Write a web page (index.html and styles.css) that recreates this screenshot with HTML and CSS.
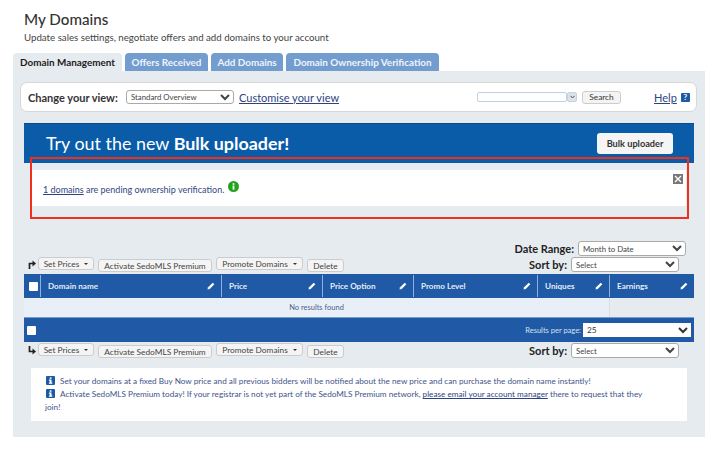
FILE: index.html
```html
<!DOCTYPE html>
<html lang="en">
<head>
<meta charset="utf-8">
<title>My Domains</title>
<link rel="stylesheet" href="styles.css">
</head>
<body>
<svg class="defs" width="0" height="0" aria-hidden="true">
  <symbol id="pencil" viewBox="0 0 10 10"><path d="M7.2.8 9.2 2.8 3.4 8.6.6 9.4 1.4 6.6Z" fill="#fff"/></symbol>
  <symbol id="info" viewBox="0 0 9 9"><rect width="9" height="9" rx="1" fill="#1d5aa6"/><rect x="3.7" y="1.3" width="1.8" height="1.5" fill="#fff"/><path d="M2.9 3.6H5.5V6.6H6.3V7.8H2.9V6.6H3.7V4.7H2.9Z" fill="#fff"/></symbol>
</svg>
<header class="head">
  <h1>My Domains</h1>
  <p>Update sales settings, negotiate offers and add domains to your account</p>
</header>
<nav class="tabs">
  <a class="tab active w1">Domain Management</a>
  <a class="tab w2">Offers Received</a>
  <a class="tab w3">Add Domains</a>
  <a class="tab w4">Domain Ownership Verification</a>
</nav>
<main class="panel">
  <section class="viewbar">
    <label class="viewlabel">Change your view:</label>
    <select class="sel viewsel"><option>Standard Overview</option></select>
    <a class="link custom">Customise your view</a>
    <span class="combo"><span class="comboinput"></span><span class="comboarrow"><svg width="5" height="4" viewBox="0 0 5 4"><path d="M.5.8 2.5 3 4.5.8" fill="none" stroke="#555" stroke-width="1"/></svg></span></span>
    <button class="btn searchbtn">Search</button>
    <a class="link help">Help</a>
    <span class="helpicon">?</span>
  </section>

  <section class="banner">
    <span class="bannertext">Try out the new <b>Bulk uploader!</b></span>
    <button class="bulkbtn">Bulk uploader</button>
  </section>

  <section class="noticewrap">
    <div class="notice">
      <span class="noticetext"><a class="link">1 domains</a> are pending ownership verification.</span>
      <svg class="okicon" width="11" height="11" viewBox="0 0 11 11"><circle cx="5.5" cy="5.5" r="5.5" fill="#24a31c"/><rect x="4.6" y="2.2" width="1.8" height="1.6" fill="#fff"/><rect x="4.6" y="4.6" width="1.8" height="4" fill="#fff"/></svg>
      <svg class="closeicon" width="10" height="10" viewBox="0 0 10 10"><rect width="10" height="10" fill="#777"/><path d="M2 2 8 8M8 2 2 8" stroke="#fff" stroke-width="1.4"/></svg>
    </div>
    <div class="redbox"></div>
  </section>

  <div class="daterow">
    <label class="biglabel">Date Range:</label>
    <select class="sel datesel"><option>Month to Date</option></select>
  </div>

  <div class="toolrow top">
    <svg class="arrow" width="8" height="9" viewBox="0 0 8 9"><path d="M1.5 9V3.5H5" fill="none" stroke="#222" stroke-width="1.7"/><path d="M4.5.6 8 3.5 4.5 6.4Z" fill="#222"/></svg>
    <button class="btn drop b1">Set Prices<i class="caret"></i></button>
    <button class="btn low b2">Activate SedoMLS Premium</button>
    <button class="btn drop b3">Promote Domains<i class="caret"></i></button>
    <button class="btn low b4">Delete</button>
    <span class="sortgroup"><label class="biglabel">Sort by:</label><select class="sel sortsel"><option>Select</option></select></span>
  </div>

  <section class="grid">
    <div class="row headrow">
      <div class="hcell check"><span class="box"></span></div>
      <div class="hcell">Domain name<svg class="pen"><use href="#pencil"/></svg></div>
      <div class="hcell">Price<svg class="pen"><use href="#pencil"/></svg></div>
      <div class="hcell">Price Option<svg class="pen"><use href="#pencil"/></svg></div>
      <div class="hcell">Promo Level<svg class="pen"><use href="#pencil"/></svg></div>
      <div class="hcell">Uniques<svg class="pen"><use href="#pencil"/></svg></div>
      <div class="hcell last">Earnings<svg class="pen"><use href="#pencil"/></svg></div>
    </div>
    <div class="row bodyrow">
      <div class="empty">No results found</div>
      <div class="emptyside"></div>
    </div>
    <div class="footrow">
      <span class="box"></span>
      <label class="rpp">Results per page:</label>
      <select class="sel rppsel"><option>25</option></select>
    </div>
  </section>

  <div class="toolrow bottom">
    <svg class="arrow" width="8" height="9" viewBox="0 0 8 9"><path d="M1.5 0V5.5H5" fill="none" stroke="#222" stroke-width="1.7"/><path d="M4.5 2.6 8 5.5 4.5 8.4Z" fill="#222"/></svg>
    <button class="btn drop b1">Set Prices<i class="caret"></i></button>
    <button class="btn low b2">Activate SedoMLS Premium</button>
    <button class="btn drop b3">Promote Domains<i class="caret"></i></button>
    <button class="btn low b4">Delete</button>
    <span class="sortgroup"><label class="biglabel">Sort by:</label><select class="sel sortsel"><option>Select</option></select></span>
  </div>

  <section class="tips">
    <p><svg class="tipicon"><use href="#info"/></svg>Set your domains at a fixed Buy Now price and all previous bidders will be notified about the new price and can purchase the domain name instantly!</p>
    <p><svg class="tipicon"><use href="#info"/></svg>Activate SedoMLS Premium today! If your registrar is not yet part of the SedoMLS Premium network, <a class="link">please email your account manager</a> there to request that they join!</p>
  </section>
</main>
</body>
</html>
```
FILE: styles.css
```css
* { box-sizing: border-box; }
html, body { margin: 0; padding: 0; }
body { width: 720px; height: 456px; background: #fff; font-family: Lato, "Noto Sans", sans-serif; color: #333; overflow: hidden; }
.defs { position: absolute; }
.head { padding: 10px 0 0 24px; height: 53px; }
h1 { margin: 0; font-size: 15.2px; line-height: 19px; font-weight: 500; color: #333; }
.head p { margin: 2px 0 0; font-size: 9.7px; line-height: 13px; color: #444; }
.tabs { display: flex; gap: 3px; margin-left: 13px; height: 18px; }
.tab { display: flex; align-items: center; justify-content: center; height: 18px; border-radius: 4px 4px 0 0; font-size: 9.9px; font-weight: 700; background: #739dcf; color: #eef4fb; }
.tab.active { background: #e6ebf0; color: #1c1c1c; }
.w1 { width: 109px; }
.w2 { width: 83px; }
.w3 { width: 72px; }
.w4 { width: 153px; }
.panel { width: 692px; height: 366px; margin: 0 0 0 13px; padding: 11px 11px 0; background: #e6ebf0; }
.viewbar { display: flex; align-items: center; width: 677px; height: 30px; margin-left: -4px; padding-left: 7px; background: #fff; border: 1px solid #d7d7d7; border-radius: 7px; }
.viewlabel { width: 98px; font-size: 11px; font-weight: 700; color: #333; }
.sel { height: 15px; padding: 0; font-family: Lato, sans-serif; font-size: 7.8px; color: #444; background: #fff; border: 1px solid #aaa; border-radius: 3px; }
.viewsel { width: 108px; height: 14px; }
.link { color: #2d437f; text-decoration: underline; }
.custom { margin-left: 5px; font-size: 11px; width: 238px; }
.combo { display: flex; align-items: center; height: 11px; }
.comboinput { width: 90px; height: 10px; background: #fff; border: 1px solid #bcd0e6; border-radius: 2px; }
.comboarrow { display: flex; align-items: center; justify-content: center; width: 10px; height: 10px; background: #dde3ea; border: 1px solid #c7d3e2; border-radius: 2px; }
.btn { font-family: Lato, sans-serif; font-size: 8.3px; color: #444; background: #f4f4f4; border: 1px solid #ccc; border-radius: 3px; padding: 0; height: 13px; }
.searchbtn { width: 39px; margin-left: 5px; color: #333; }
.help { margin-left: 33px; font-size: 11px; }
.helpicon { display: flex; align-items: center; justify-content: center; width: 9px; height: 9px; margin-left: 4px; background: #1d5aa6; border-radius: 1px; font-size: 8px; line-height: 9px; font-weight: 700; color: #fff; }
.banner { display: flex; align-items: center; justify-content: space-between; width: 670px; height: 40px; margin-top: 11px; padding: 0 21px 2px 22px; background: #0a5ca8; border-top: 1px solid #0a4a88; }
.bannertext { font-size: 17.9px; color: #fff; }
.bannertext b { font-weight: 700; }
.bulkbtn { width: 76px; height: 21px; margin-top: 1px; font-family: Lato, sans-serif; font-size: 9.2px; font-weight: 700; color: #333; background: #f5f5f5; border: 0; border-radius: 3px; }
.noticewrap { position: relative; width: 670px; height: 78px; padding-top: 7px; }
.notice { position: relative; display: flex; align-items: flex-start; width: 655px; height: 36px; margin-left: 7px; background: #fff; padding: 13px 0 0 12px; }
.noticetext { font-size: 9px; line-height: 13px; color: #33487e; }
.okicon { margin: -2px 0 0 4px; }
.closeicon { position: absolute; top: 4px; right: 3px; }
.redbox { position: absolute; left: 6px; top: -6px; width: 659px; height: 62px; border: 2px solid #f0301a; pointer-events: none; }
.daterow { display: flex; justify-content: flex-end; align-items: center; gap: 4px; width: 662px; height: 15px; }
.biglabel { font-size: 11px; font-weight: 700; color: #222; }
.datesel { width: 108px; }
.toolrow { display: flex; align-items: flex-start; width: 670px; height: 16px; padding-left: 4px; }
.toolrow.top { height: 15px; margin-top: 1px; }
.arrow { margin: 3px 2px 0 0; flex: none; }
.drop { height: 13px; margin-right: 4px; }
.low { height: 13px; margin: 2px 4px 0 0; }
.b1 { width: 56px; }
.b2 { width: 114px; }
.b3 { width: 87px; }
.b4 { width: 37px; }
.caret { display: inline-block; margin-left: 5px; vertical-align: middle; border: 2px solid transparent; border-top: 2px solid #333; border-bottom: 0; }
.sortgroup { display: flex; align-items: center; gap: 4px; margin-left: auto; margin-right: 15px; }
.sortsel { width: 108px; }
.grid { width: 670px; margin-top: 2px; }
.row { display: grid; grid-template-columns: 17px 181px 101px 91px 124px 72px 84px; }
.headrow { height: 24px; background: #2059a5; padding: 1px 0; }
.hcell { position: relative; display: flex; align-items: center; padding-left: 7px; font-size: 8.1px; font-weight: 700; color: #e4ecf6; border-right: 1px solid #8fb0d8; }
.hcell.last { border-right: 0; }
.hcell.check { padding-left: 5px; }
.box { display: block; flex: none; width: 9px; height: 9px; background: #fff; border-radius: 1px; }
.pen { position: absolute; right: 6px; top: 7px; width: 8px; height: 8px; }
.bodyrow { height: 19px; grid-template-columns: 586px 84px; }
.empty { display: flex; align-items: center; justify-content: center; font-size: 7.5px; color: #4b5f8d; background: #e9eff7; border-right: 1px solid #d8dde3; }
.footrow { display: flex; align-items: center; height: 25px; padding: 0 3px; background: #2059a5; border-top: 1px solid #7a9ccb; }
.rpp { margin-left: auto; margin-right: 2px; font-size: 7.5px; color: #d5e0ee; }
.rppsel { width: 108px; height: 14px; border-radius: 0; border: 0; color: #333; font-size: 8.3px; }
.toolrow.bottom { height: 16px; margin-top: 1px; }
.tips { width: 656px; height: 53px; margin: 9px 0 0 7px; padding: 7px 30px 0 14px; background: #fff; font-size: 8.2px; line-height: 13px; color: #3f5489; }
.tips p { margin: 0; }
.tipicon { width: 9px; height: 9px; margin: 0 5px 0 1px; vertical-align: -1px; }
```
